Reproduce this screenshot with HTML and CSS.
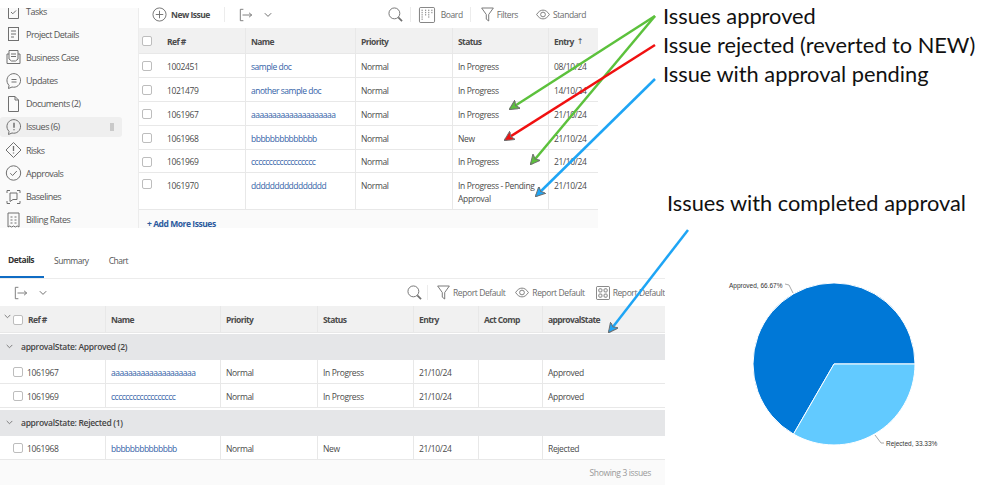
FILE: index.html
```html
<!DOCTYPE html>
<html lang="en">
<head>
  <meta charset="UTF-8" />
  <title>Issues and approvals</title>
  <link rel="stylesheet" href="styles.css">
</head>
<body>
  <svg class="icon-defs" width="0" height="0">
    <symbol id="i-export" viewBox="0 0 16 16"><path d="M5 1.5H1.5v13H5M4 8h10.5M11.5 5.5l3 2.5-3 2.5"/></symbol>
    <symbol id="i-chevron" viewBox="0 0 8 8"><path d="M.8 2.2 4 5.4l3.2-3.2"/></symbol>
    <symbol id="i-search" viewBox="0 0 16 16"><circle cx="6.8" cy="6.8" r="5.8"/><path d="m11 11 4 4" stroke-width="1.8"/></symbol>
    <symbol id="i-filter" viewBox="0 0 14 16"><path d="M.7 1h12.6L8.3 8v7L5.7 13V8z"/></symbol>
    <symbol id="i-eye" viewBox="0 0 16 12"><path d="M.7 6C3 2.400 5.400 1 8 1s5 1.400 7.300 5C13 9.600 10.600 11 8 11S3 9.600.7 6z"/><circle cx="8" cy="6" r="2.700"/></symbol>
  </svg>

  <div class="page">
    <div class="panels">
      <section class="project">
        <nav class="sidebar">
          <a class="nav-item"><svg class="nav-icon" viewBox="0 0 18 18"><path d="M4.500 6v10.500h10V6M7 10l1.800 1.800L12 8.500"/></svg>Tasks</a>
          <a class="nav-item"><svg class="nav-icon" viewBox="0 0 18 18"><rect x="4.500" y="2.500" width="10" height="13"/><path d="M7 6h5M7 9h5M7 12h3"/></svg>Project Details</a>
          <a class="nav-item"><svg class="nav-icon" viewBox="0 0 18 18"><path d="M5 6H3v9.500h13V6h-2M5 11V2.500h9V11l-2.500 2h-4zM7 6h5M7 8.500h5"/></svg>Business Case</a>
          <a class="nav-item"><svg class="nav-icon" viewBox="0 0 18 18"><path d="M4.500 16.500 5 13.300A6.800 6.800 0 1 1 8 15z"/><path d="M7.500 7.500h5M7.500 10h5"/></svg>Updates</a>
          <a class="nav-item"><svg class="nav-icon" viewBox="0 0 18 18"><path d="M4.500 1.500H11l3.500 3.500v11.500h-10zM11 1.500V5h3.500"/></svg>Documents (2)</a>
          <a class="nav-item is-active"><svg class="nav-icon" viewBox="0 0 18 18"><path d="M4.500 16.500 5 13.300A6.800 6.800 0 1 1 8 15z"/><path d="M10 4.800v5M10 11.300v1" stroke-width="1.500"/></svg>Issues (6)<span class="grip"></span></a>
          <a class="nav-item"><svg class="nav-icon" viewBox="0 0 18 18"><path d="M9.500 1.500 17 9l-7.500 7.500L2 9z"/><path d="M9.500 5v5M9.500 11.500v1" stroke-width="1.300"/></svg>Risks</a>
          <a class="nav-item"><svg class="nav-icon" viewBox="0 0 18 18"><circle cx="9.500" cy="9" r="7.200"/><path d="m6.300 9.200 2.300 2.300 4.200-4.500"/></svg>Approvals</a>
          <a class="nav-item"><svg class="nav-icon" viewBox="0 0 18 18"><path d="M3 5V2.500h3M13 2.500h3V5M16 13v2.500h-3M6 15.500H3V13M6 5h7v6.500H9l-3 2z"/></svg>Baselines</a>
          <a class="nav-item"><svg class="nav-icon" viewBox="0 0 18 18"><path d="M4 2h11v14l-1.800-1-1.800 1-1.900-1-1.900 1-1.800-1L4 16zM6.500 6h2M10.500 6h2M6.500 9h2M10.500 9h2M6.500 12h2M10.500 12h2"/></svg>Billing Rates</a>
        </nav>

        <div class="project-main">
          <div class="toolbar toolbar-top">
            <div class="tool-group">
              <svg class="plus-icon" viewBox="0 0 16 16"><circle cx="8" cy="8" r="7"/><path d="M8 4v8M4 8h8"/></svg>
              <strong class="new-issue">New Issue</strong>
              <span class="tool-divider"></span>
              <svg class="tool-icon export-icon"><use href="#i-export"/></svg>
              <svg class="chevron-icon"><use href="#i-chevron"/></svg>
            </div>
            <div class="tool-group">
              <svg class="tool-icon"><use href="#i-search"/></svg>
              <span class="tool-divider"></span>
              <svg class="board-icon" viewBox="0 0 18 18"><rect x=".5" y=".5" width="17" height="17" rx="1.500"/><path d="M3.500 3v12M7.500 3v7M11 3v9M14.500 3v5" stroke-dasharray="1.500 1"/></svg>
              <span class="tool-label">Board</span>
              <span class="tool-divider"></span>
              <svg class="filter-icon"><use href="#i-filter"/></svg>
              <span class="tool-label">Filters</span>
              <svg class="eye-icon"><use href="#i-eye"/></svg>
              <span class="tool-label">Standard</span>
            </div>
          </div>

          <div class="issues issues-top">
            <div class="row row-head">
              <div class="cell cell-ref"><span class="check"></span><span class="ref-head">Ref #</span></div>
              <div class="cell">Name</div>
              <div class="cell">Priority</div>
              <div class="cell">Status</div>
              <div class="cell">Entry<span class="sort-arrow">↑</span></div>
            </div>
            <div class="row">
              <div class="cell cell-ref"><span class="check"></span>1002451</div>
              <div class="cell"><a class="link">sample doc</a></div>
              <div class="cell">Normal</div>
              <div class="cell">In Progress</div>
              <div class="cell">08/10/24</div>
            </div>
            <div class="row">
              <div class="cell cell-ref"><span class="check"></span>1021479</div>
              <div class="cell"><a class="link">another sample doc</a></div>
              <div class="cell">Normal</div>
              <div class="cell">In Progress</div>
              <div class="cell">14/10/24</div>
            </div>
            <div class="row">
              <div class="cell cell-ref"><span class="check"></span>1061967</div>
              <div class="cell"><a class="link">aaaaaaaaaaaaaaaaaaaa</a></div>
              <div class="cell">Normal</div>
              <div class="cell">In Progress</div>
              <div class="cell">21/10/24</div>
            </div>
            <div class="row">
              <div class="cell cell-ref"><span class="check"></span>1061968</div>
              <div class="cell"><a class="link">bbbbbbbbbbbbbb</a></div>
              <div class="cell">Normal</div>
              <div class="cell">New</div>
              <div class="cell">21/10/24</div>
            </div>
            <div class="row row-short">
              <div class="cell cell-ref"><span class="check"></span>1061969</div>
              <div class="cell"><a class="link">cccccccccccccccccc</a></div>
              <div class="cell">Normal</div>
              <div class="cell">In Progress</div>
              <div class="cell">21/10/24</div>
            </div>
            <div class="row row-tall">
              <div class="cell cell-ref"><span class="check"></span>1061970</div>
              <div class="cell"><a class="link">dddddddddddddddd</a></div>
              <div class="cell">Normal</div>
              <div class="cell">In Progress - Pending Approval</div>
              <div class="cell">21/10/24</div>
            </div>
            <div class="add-more"><a class="add-link">+ Add More Issues</a></div>
          </div>
        </div>
      </section>

      <section class="report">
        <div class="tabs">
          <a class="tab is-current">Details</a>
          <a class="tab">Summary</a>
          <a class="tab">Chart</a>
        </div>
        <div class="toolbar toolbar-report">
          <div class="tool-group">
            <svg class="tool-icon export-icon"><use href="#i-export"/></svg>
            <svg class="chevron-icon"><use href="#i-chevron"/></svg>
          </div>
          <div class="tool-group">
            <svg class="tool-icon"><use href="#i-search"/></svg>
            <span class="tool-divider"></span>
            <svg class="filter-icon"><use href="#i-filter"/></svg>
            <span class="tool-label">Report Default</span>
            <svg class="eye-icon"><use href="#i-eye"/></svg>
            <span class="tool-label">Report Default</span>
            <svg class="groups-icon" viewBox="0 0 16 16"><rect x=".5" y=".5" width="15" height="15" rx="1.500"/><rect x="3.200" y="3.200" width="3.600" height="3.600" rx="1"/><rect x="9.200" y="3.200" width="3.600" height="3.600" rx="1"/><rect x="3.200" y="9.200" width="3.600" height="3.600" rx="1"/><rect x="9.200" y="9.200" width="3.600" height="3.600" rx="1"/></svg>
            <span class="tool-label">Report Default</span>
          </div>
        </div>

        <div class="issues issues-report">
          <div class="row row-head">
            <div class="cell cell-ref"><svg class="chevron-icon head-chevron"><use href="#i-chevron"/></svg><span class="check"></span><span>Ref #</span></div>
            <div class="cell">Name</div>
            <div class="cell">Priority</div>
            <div class="cell">Status</div>
            <div class="cell">Entry</div>
            <div class="cell">Act Comp</div>
            <div class="cell">approvalState</div>
          </div>
          <div class="group-row"><svg class="chevron-icon"><use href="#i-chevron"/></svg>approvalState: Approved (2)</div>
          <div class="row">
            <div class="cell cell-ref"><span class="check"></span>1061967</div>
            <div class="cell"><a class="link">aaaaaaaaaaaaaaaaaaaa</a></div>
            <div class="cell">Normal</div>
            <div class="cell">In Progress</div>
            <div class="cell">21/10/24</div>
            <div class="cell"></div>
            <div class="cell">Approved</div>
          </div>
          <div class="row">
            <div class="cell cell-ref"><span class="check"></span>1061969</div>
            <div class="cell"><a class="link">cccccccccccccccccc</a></div>
            <div class="cell">Normal</div>
            <div class="cell">In Progress</div>
            <div class="cell">21/10/24</div>
            <div class="cell"></div>
            <div class="cell">Approved</div>
          </div>
          <div class="group-row group-next"><svg class="chevron-icon"><use href="#i-chevron"/></svg>approvalState: Rejected (1)</div>
          <div class="row">
            <div class="cell cell-ref"><span class="check"></span>1061968</div>
            <div class="cell"><a class="link">bbbbbbbbbbbbbb</a></div>
            <div class="cell">Normal</div>
            <div class="cell">New</div>
            <div class="cell">21/10/24</div>
            <div class="cell"></div>
            <div class="cell">Rejected</div>
          </div>
          <div class="report-foot">Showing 3 issues</div>
        </div>
      </section>
    </div>

    <aside class="chart-side">
      <svg class="pie" viewBox="665 0 334 485" width="334" height="485">
        <path class="slice-approved" d="M834 364 L915 364 A81 81 0 1 0 793.500 434.100 Z"/>
        <path class="slice-rejected" d="M834 364 L793.500 434.100 A81 81 0 0 0 915 364 Z"/>
        <path class="leader" d="M785 284 L789 285 L793 293"/>
        <path class="leader" d="M875 435 L881 443 L884 443"/>
        <text class="pie-label" x="729" y="287.500">Approved, 66.67%</text>
        <text class="pie-label" x="886" y="445.500">Rejected, 33.33%</text>
      </svg>
    </aside>
  </div>

  <!-- annotations drawn on top of the screenshots -->
  <svg class="arrows" viewBox="0 0 999 485" width="999" height="485">
    <defs>
      <marker id="head-green" markerUnits="userSpaceOnUse" markerWidth="10" markerHeight="10" refX="9" refY="5" orient="auto"><path d="M0 0 10 5 0 10 2.500 5z" fill="#5cc13c"/></marker>
      <marker id="head-red" markerUnits="userSpaceOnUse" markerWidth="10" markerHeight="10" refX="9" refY="5" orient="auto"><path d="M0 0 10 5 0 10 2.500 5z" fill="#f01010"/></marker>
      <marker id="head-blue" markerUnits="userSpaceOnUse" markerWidth="10" markerHeight="10" refX="9" refY="5" orient="auto"><path d="M0 0 10 5 0 10 2.500 5z" fill="#1ea5f5"/></marker>
    </defs>
    <path class="arrow-green" d="M655 16 L510 109" marker-end="url(#head-green)"/>
    <path class="arrow-green" d="M655 16 L531 164" marker-end="url(#head-green)"/>
    <path class="arrow-red" d="M655 45 L505 140" marker-end="url(#head-red)"/>
    <path class="arrow-blue" d="M655 79 L536 196" marker-end="url(#head-blue)"/>
    <path class="arrow-blue" d="M688 230 L609 332" marker-end="url(#head-blue)"/>
  </svg>
  <ul class="notes">
    <li>Issues approved</li>
    <li>Issue rejected (reverted to NEW)</li>
    <li>Issue with approval pending</li>
  </ul>
  <p class="note-completed">Issues with completed approval</p>
</body>
</html>
```

FILE: styles.css
```css
html, body {
  margin: 0;
  padding: 0;
  height: 100%;
  background: #fff;
  overflow: hidden;
}
body {
  position: relative;
  font-family: "Open Sans", "Noto Sans", sans-serif;
  font-size: 8.5px;
  color: #4b4b4b;
  letter-spacing: -0.35px;
}
.icon-defs {
  position: absolute;
}
svg {
  display: block;
  flex: none;
  fill: none;
  stroke: #707070;
  stroke-width: 1;
}
.page {
  display: flex;
  width: 999px;
  height: 485px;
}
.panels {
  width: 665px;
  flex: none;
}
.chart-side {
  flex: 1;
}

/* top screenshot */
.project {
  display: flex;
  width: 598px;
  height: 220px;
  margin-top: 8px;
}
.sidebar {
  width: 138px;
  flex: none;
  background: #fafafa;
  border-right: 1px solid #ececec;
  font-size: 9px;
  letter-spacing: -0.5px;
  color: #555;
}
.nav-item {
  display: flex;
  align-items: center;
  gap: 4px;
  height: 20px;
  margin: 3.200px 16px 0 0;
  padding-left: 4px;
  border-radius: 3px;
}
.nav-item:first-child {
  margin-top: -7px;
}
.nav-item.is-active {
  background: #efefef;
}
.nav-icon {
  width: 18px;
  height: 18px;
}
.grip {
  width: 4px;
  height: 8px;
  margin: 0 8px 0 auto;
  background: radial-gradient(circle, #808080 40%, transparent 55%) 0 0 / 2px 2px;
}
.project-main {
  flex: 1;
  min-width: 0;
}

/* toolbars */
.toolbar {
  display: flex;
  align-items: center;
  justify-content: space-between;
  overflow: hidden;
}
.tool-group {
  display: flex;
  align-items: center;
  flex: none;
}
.toolbar-top {
  height: 20px;
  box-sizing: border-box;
  padding: 0 12px 7px 13px;
  overflow: visible;
}
.toolbar-report {
  height: 27px;
  padding-left: 14px;
  background: #fff;
}
.tool-icon {
  width: 15px;
  height: 15px;
}
.export-icon {
  width: 14px;
  height: 14px;
}
.chevron-icon {
  width: 8px;
  height: 8px;
  margin-left: 11px;
}
.plus-icon {
  width: 15px;
  height: 15px;
}
.new-issue {
  margin: 0 7px 0 4px;
  font-weight: 700;
  letter-spacing: -0.5px;
  color: #4b4b4b;
}
.tool-divider {
  width: 1px;
  height: 15px;
  margin: 0 7px;
  background: #ececec;
}
.toolbar-report .tool-divider {
  margin: 0 6px 0 5px;
}
.toolbar-top .export-icon {
  margin-left: 7px;
}
.board-icon {
  width: 18px;
  height: 16px;
  margin-right: 5px;
}
.filter-icon {
  width: 13px;
  height: 15px;
  margin: 0 3px 0 3px;
}
.eye-icon {
  width: 14px;
  height: 11px;
  margin: 0 3px 0 10px;
}
.toolbar-top .eye-icon {
  margin-left: 18px;
}
.groups-icon {
  width: 14px;
  height: 14px;
  margin: 0 3px 0 11px;
}
.tool-label {
  letter-spacing: -0.4px;
  color: #6b6b6b;
  white-space: nowrap;
}

/* tables */
.row {
  display: grid;
  height: 24px;
  box-sizing: border-box;
  border-bottom: 1px solid #e8e8e8;
  background: #fff;
}
.issues-top .row {
  grid-template-columns: 106px 110px 97px 96px 50px;
}
.issues-report .row {
  grid-template-columns: 105px 115px 97px 96px 65px 64px 123px;
}
.cell {
  display: flex;
  align-items: center;
  min-width: 0;
  padding: 1px 5px 0;
  border-left: 1px solid #e8e8e8;
  line-height: 13px;
}
.cell:first-child {
  border-left: 0;
}
.row-head {
  height: 26px;
  background: #f1f1f1;
  font-weight: 700;
  letter-spacing: -0.6px;
  color: #4b4b4b;
}
.issues-report .row-head {
  height: 27px;
}
.sort-arrow {
  margin-left: 3px;
  font-family: "DejaVu Sans", sans-serif;
  font-size: 8px;
  font-weight: 400;
}
.row-short {
  height: 23px;
}
.row-tall {
  height: 37px;
}
.row-tall .cell {
  align-items: flex-start;
  padding-top: 6px;
}
.check {
  width: 10px;
  height: 10px;
  flex: none;
  box-sizing: border-box;
  border: 1px solid #bdbdbd;
  border-radius: 2px;
  background: #fff;
}
.issues-top .cell-ref {
  padding-left: 3px;
  gap: 15px;
}
.issues-report .cell-ref {
  padding-left: 13px;
  gap: 4px;
}
.head-chevron {
  margin: -6px 2px 0 -9px;
  width: 7px;
  height: 7px;
}
.issues-report .row-head .cell-ref {
  gap: 5px;
}
.issues-report .row-head .head-chevron {
  margin-right: -3px;
}
.link {
  letter-spacing: -0.5px;
  color: #3563a8;
  white-space: nowrap;
}
.add-more {
  height: 18px;
  box-sizing: border-box;
  display: flex;
  align-items: center;
  padding: 8px 0 0 8px;
  background: #fafafa;
}
.add-link {
  font-weight: 700;
  letter-spacing: -0.45px;
  color: #2c5a9e;
}

/* report */
.report {
  margin-top: 12px;
}
.tabs {
  display: flex;
  height: 39px;
  box-sizing: border-box;
  border-bottom: 1px solid #ececec;
  letter-spacing: -0.5px;
  color: #555;
}
.tab {
  display: flex;
  align-items: center;
  height: 38px;
  box-sizing: border-box;
  padding: 2px 10px 0;
}
.tab.is-current {
  padding-left: 8px;
  font-weight: 700;
  color: #333;
  border-bottom: 2px solid #0f6cc4;
}
.group-row {
  display: flex;
  align-items: center;
  gap: 8px;
  height: 26px;
  box-sizing: border-box;
  margin-top: 1px;
  padding: 0 0 1px 6px;
  background: #e5e6e8;
  font-weight: 600;
  letter-spacing: -0.3px;
  color: #444;
}
.group-row .chevron-icon {
  margin-left: 0;
  width: 7px;
  height: 7px;
}
.group-next {
  margin-top: 2px;
}
.report-foot {
  height: 25px;
  display: flex;
  align-items: center;
  justify-content: flex-end;
  padding-right: 14px;
  background: #fafafa;
  color: #999;
}

/* pie chart */
.pie {
  stroke: none;
}
.slice-approved {
  fill: #0078d7;
  stroke: #fff;
}
.slice-rejected {
  fill: #62caff;
  stroke: #fff;
}
.leader {
  fill: none;
  stroke: #aaa;
}
.pie-label {
  fill: #333;
  stroke: none;
  font-family: "Liberation Sans", sans-serif;
  font-size: 6.500px;
  letter-spacing: 0;
}

/* annotations */
.arrows {
  position: absolute;
  left: 0;
  top: 0;
  pointer-events: none;
}
.arrow-green,
.arrow-red,
.arrow-blue {
  fill: none;
  stroke-width: 2.500;
}
.arrow-green { stroke: #5cc13c; }
.arrow-red { stroke: #f01010; }
.arrow-blue { stroke: #1ea5f5; }
.notes {
  position: absolute;
  left: 663px;
  top: 1px;
  margin: 0;
  padding: 0;
  list-style: none;
}
.notes li,
.note-completed {
  font-family: Lato, "Open Sans", sans-serif;
  font-size: 21.800px;
  line-height: 29px;
  letter-spacing: 0;
  color: #111;
  white-space: nowrap;
}
.note-completed {
  position: absolute;
  left: 667px;
  top: 188px;
  margin: 0;
}
```
